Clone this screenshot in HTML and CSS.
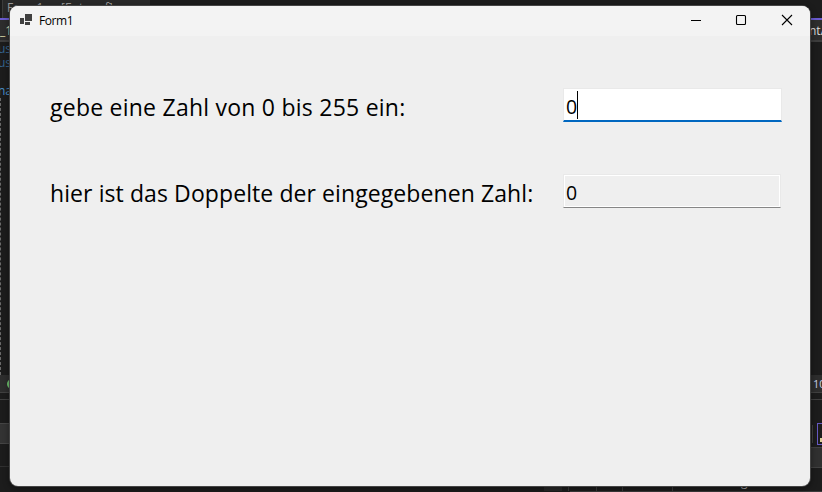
FILE: index.html
```
<!DOCTYPE html>
<html lang="de">
<head>
<meta charset="utf-8">
<title>Form1</title>
<link rel="stylesheet" href="styles.css">
</head>
<body>
<div class="desktop">
  <div class="ide">
    <div class="tabs"><div class="tab">Form1.cs [Entwurf]</div></div>
    <div class="nav"><span>_1</span><span class="nav-end">ntA</span></div>
    <div class="editor">
      <div class="code">us</div>
      <div class="code">us</div>
      <div class="code blank"></div>
      <div class="code bright">na</div>
      <div class="guide"></div>
    </div>
    <div class="status"><i class="ok"></i><span class="zoom">100</span></div>
    <div class="split"></div>
    <div class="panels">
      <div class="panel-left"><div class="tool-gap"></div><div class="list-row"></div><div class="rest"></div></div>
      <div class="panel-right"><div class="tools"><i class="sep"></i><i class="box"><b></b></i></div><div class="head"></div><div class="rest"></div></div>
    </div>
    <div class="bottom"><i class="thumb"></i><i class="c1"></i><i class="c2"></i><i class="c3"></i><i class="c4"></i><span class="tail">g</span></div>
    <div class="edge"></div>
  </div>
  <main class="window">
    <header class="titlebar">
      <svg class="app-icon" width="13" height="12" viewBox="0 0 13 12"><path fill="#404040" d="M0 4h4v6H0zM5 0h7v7H5zM5 8h5v3H5z"/></svg>
      <span class="title">Form1</span>
      <div class="controls">
        <svg width="46" height="29" viewBox="0 0 46 29"><path d="M18 14.5h10" stroke="#000"/></svg>
        <svg width="45" height="29" viewBox="0 0 45 29"><rect x="17.5" y="9.5" width="9" height="9" rx="1" fill="none" stroke="#000" stroke-width="1.1"/></svg>
        <svg width="46" height="29" viewBox="0 0 46 29"><path d="M18 9l10 10M28 9L18 19" stroke="#000" stroke-width="1.1"/></svg>
      </div>
    </header>
    <section class="form">
      <div class="row">
        <span class="label first">gebe eine Zahl von 0 bis 255 ein:</span>
        <div class="field active"><span>0</span><i class="caret"></i></div>
      </div>
      <div class="row">
        <span class="label second">hier ist das Doppelte der eingegebenen Zahl:</span>
        <div class="field readonly"><span>0</span></div>
      </div>
    </section>
  </main>
</div>
</body>
</html>
```
FILE: styles.css
```
* { box-sizing: border-box; }
body { margin: 0; font-family: "Open Sans", "Noto Sans", sans-serif; overflow: hidden; }
i { display: block; flex: none; }
.desktop { position: relative; width: 822px; height: 492px; overflow: hidden; background: #1c1c1c; }
.ide { display: flex; flex-direction: column; height: 492px; }
.ide > div { flex: none; }

.tabs { height: 18px; padding-left: 2px; background: #1c1c1c; }
.tab { width: 148px; height: 18px; padding-left: 4px; border-left: 1px solid #3b3b3b; background: #292929; color: #9b9b9b; font-size: 12px; line-height: 16px; white-space: nowrap; }
.nav { display: flex; justify-content: space-between; height: 24px; border-top: 2px solid #6a5bd0; border-bottom: 2px solid #3d3d3d; background: #2d2d2d; color: #dcdcaa; font-size: 12px; line-height: 21px; overflow: hidden; }
.nav-end { width: 13px; color: #dcdcdc; white-space: nowrap; }
.editor { height: 333px; overflow: hidden; }
.code { height: 14px; color: #36648e; font: 12px/13px "Open Sans", sans-serif; margin-left: -2px; }
.code.bright { color: #4a91cb; }
.guide { height: 277px; border-left: 1px dashed #6b6b6b; }
.status { display: flex; justify-content: space-between; align-items: center; height: 18px; border-bottom: 1px solid #404040; background: #2d2d2d; }
.ok { width: 10px; height: 10px; margin-left: 7px; border-radius: 50%; background: #6fc46f; }
.zoom { width: 9px; color: #c8d0e8; font-size: 11px; line-height: 16px; }
.split { height: 7px; border-bottom: 1px solid #404040; }
.panels { display: flex; justify-content: space-between; height: 86px; }
.panel-left { width: 400px; display: flex; flex-direction: column; }
.tool-gap { height: 23px; }
.list-row { height: 21px; border-top: 1px solid #454545; border-bottom: 1px solid #454545; background: #333; }
.panel-left .rest { height: 23px; border-bottom: 1px solid #303030; }
.panel-right { width: 400px; }
.tools { display: flex; justify-content: flex-end; align-items: flex-start; height: 47px; padding-top: 23px; }
.sep { width: 1px; height: 18px; margin: 2px 4px 0 0; background: #404040; }
.box { width: 5px; height: 22px; padding: 14px 0 0 2px; border: 1px solid #6659c2; border-right: 0; }
.box b { display: block; width: 2px; height: 4px; background: #d8ce9a; }
.head { height: 21px; border-top: 1px solid #414141; border-bottom: 1px solid #414141; background: #303030; }
.bottom { display: flex; height: 5px; padding-left: 544px; overflow: hidden; }
.bottom i { height: 5px; border-right: 1px solid #3b3b3b; }
.bottom .thumb { width: 18px; border: 0; background: #292929; }
.c1 { width: 7px; } .c2 { width: 28px; } .c3 { width: 26px; } .c4 { width: 50px; }
.tail { margin: -10px 0 0 68px; color: #aaa; font-size: 12px; line-height: 12px; }
.edge { height: 3px; margin-left: 570px; border-top: 1px solid #3b3b3b; }

.window { position: absolute; left: 10px; top: 6px; width: 800px; height: 480px; border-radius: 8px; background: #efefef; box-shadow: 0 0 0 1px #454545, 0 2px 6px 1px rgba(0, 0, 0, .4); overflow: hidden; color: #000; }
.titlebar { display: flex; height: 30px; padding-left: 10px; background: #f3f3f3; }
.app-icon { margin-top: 8px; }
.title { margin-left: 6px; font-size: 12px; line-height: 29px; letter-spacing: -.4px; }
.controls { display: flex; margin-left: auto; }
.form { padding: 52px 28px 0 40px; }
.row { display: flex; justify-content: space-between; height: 34px; margin-bottom: 52px; }
.label { font-size: 23px; line-height: 39px; white-space: nowrap; }
.first { letter-spacing: .24px; }
.second { letter-spacing: .09px; }
.field { display: flex; width: 219px; height: 34px; padding-left: 2px; font-size: 19.5px; line-height: 35px; }
.active { border: 1px solid #e9e9e9; border-bottom: 2px solid #0067c0; background: #fff; }
.caret { width: 1px; height: 28px; margin-top: 2px; background: #000; }
.readonly { width: 218px; margin-right: 1px; border: 1px solid #e9e9e9; border-bottom: 1px solid #868686; box-shadow: inset 0 0 0 1px #fff; }
```
